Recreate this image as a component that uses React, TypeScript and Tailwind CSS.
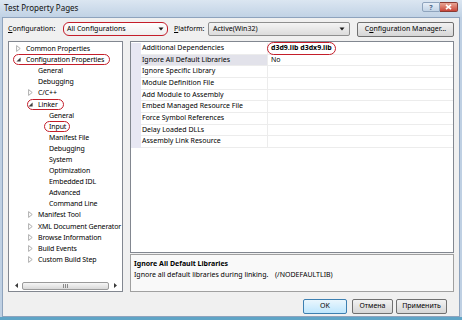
import React from "react";

const Collapsed = () => (
  <svg width="5" height="7" viewBox="0 0 5 7">
    <path d="M0.6 0.6 L4.2 3.5 L0.6 6.4 Z" fill="#ffffff" stroke="#a6a6a6" strokeWidth="0.9" />
  </svg>
);
const Expanded = () => (
  <svg width="5" height="5" viewBox="0 0 5 5">
    <path d="M4.6 0.4 L4.6 4.6 L0.4 4.6 Z" fill="#404040" />
  </svg>
);

type TreeItem = {
  level: 0 | 1 | 2;
  label: string;
  arrow?: "c" | "e";
  circle?: "cp" | "lk" | "in";
};

const tree: TreeItem[] = [
  { level: 0, label: "Common Properties", arrow: "c" },
  { level: 0, label: "Configuration Properties", arrow: "e", circle: "cp" },
  { level: 1, label: "General" },
  { level: 1, label: "Debugging" },
  { level: 1, label: "C/C++", arrow: "c" },
  { level: 1, label: "Linker", arrow: "e", circle: "lk" },
  { level: 2, label: "General" },
  { level: 2, label: "Input", circle: "in" },
  { level: 2, label: "Manifest File" },
  { level: 2, label: "Debugging" },
  { level: 2, label: "System" },
  { level: 2, label: "Optimization" },
  { level: 2, label: "Embedded IDL" },
  { level: 2, label: "Advanced" },
  { level: 2, label: "Command Line" },
  { level: 1, label: "Manifest Tool", arrow: "c" },
  { level: 1, label: "XML Document Generator", arrow: "c" },
  { level: 1, label: "Browse Information", arrow: "c" },
  { level: 1, label: "Build Events", arrow: "c" },
  { level: 1, label: "Custom Build Step", arrow: "c" },
];

const padClass: Record<number, string> = {
  0: "pl-[5px]",
  1: "pl-[17px]",
  2: "pl-[28px]",
};

const circleClass: Record<string, string> = {
  cp: "-left-[13px] -right-[6px]",
  lk: "-left-[11px] -right-[6px]",
  in: "-left-[5px] -right-[4px]",
};

function TreeRow({ item }: { item: TreeItem }) {
  return (
    <div className={`h-[11.1px] flex items-center whitespace-nowrap tracking-[-0.12px] ${padClass[item.level]}`}>
      <span className="w-[12px] pr-[4px] flex justify-center items-center shrink-0">
        {item.arrow === "c" ? <Collapsed /> : item.arrow === "e" ? <Expanded /> : null}
      </span>
      <span className="relative leading-[11px]">
        {item.label}
        {item.circle && (
          <span
            className={`absolute top-[0px] bottom-[0px] rounded-full border-[1.5px] border-[#c41e2a] ${circleClass[item.circle]}`}
          />
        )}
      </span>
    </div>
  );
}

const props: { name: string; value?: string; bold?: boolean; circled?: boolean; selected?: boolean }[] = [
  { name: "Additional Dependencies", value: "d3d9.lib d3dx9.lib", bold: true, circled: true },
  { name: "Ignore All Default Libraries", value: "No", selected: true },
  { name: "Ignore Specific Library" },
  { name: "Module Definition File" },
  { name: "Add Module to Assembly" },
  { name: "Embed Managed Resource File" },
  { name: "Force Symbol References" },
  { name: "Delay Loaded DLLs" },
  { name: "Assembly Link Resource" },
];

function DownArrow() {
  return (
    <svg width="6" height="4" viewBox="0 0 6 4">
      <path d="M0.5 0.5 L5.5 0.5 L3 3.5 Z" fill="#1a1a1a" />
    </svg>
  );
}

export default function App() {
  return (
    <div className="w-[462px] h-[320px] flex flex-col bg-[#bfd0e3] font-['Noto_Sans',sans-serif] text-[7px] text-black overflow-hidden">
      {/* Title bar */}
      <div className="h-[17px] flex items-start pl-[4px] pr-[4px] bg-gradient-to-b from-[#dbe6f1] to-[#c1d2e5]">
        <span className="mt-[3px] leading-[10px] text-[8px] text-[#111]">Test Property Pages</span>
        <div className="ml-auto flex mt-[2px]">
          <div className="w-[18px] h-[10px] rounded-l-[2px] border border-[#8fa4bd] bg-gradient-to-b from-[#e6eef7] to-[#c3d4e6] flex items-center justify-center text-[7px] leading-none text-[#4a6688] font-bold">
            ?
          </div>
          <div className="w-[18px] h-[10px] rounded-r-[2px] border border-l-0 border-[#8a3b34] bg-gradient-to-b from-[#e8a595] to-[#c8443a] flex items-center justify-center">
            <svg width="7" height="6" viewBox="0 0 7 6">
              <path d="M1 0.8 L6 5.2 M6 0.8 L1 5.2" stroke="#ffffff" strokeWidth="1.6" />
            </svg>
          </div>
        </div>
      </div>

      {/* Body */}
      <div className="flex-1 mx-[2px] bg-[#f0f0f0] border border-[#8ea3bd] flex flex-col px-[5px] pt-[4px]">
        {/* Configuration row */}
        <div className="h-[14px] flex items-center">
          <span className="w-[55px] shrink-0">
            <span className="underline">C</span>onfiguration:
          </span>
          <div className="w-[105px] h-[14px] shrink-0 rounded-[6px] border-[1.5px] border-[#c41e2a] bg-gradient-to-b from-[#ffffff] to-[#eeeeee] flex items-center pl-[3px] pr-[3px]">
            <span>All Configurations</span>
            <span className="ml-auto flex">
              <DownArrow />
            </span>
          </div>
          <span className="ml-[6px] w-[34px] shrink-0">
            <span className="underline">P</span>latform:
          </span>
          <div className="w-[142px] h-[14px] shrink-0 rounded-[2px] border border-[#8e8f8f] bg-gradient-to-b from-[#f4f4f4] to-[#dcdcdc] flex items-center pl-[4px] pr-[4px]">
            <span>Active(Win32)</span>
            <span className="ml-auto flex">
              <DownArrow />
            </span>
          </div>
          <div className="ml-[7px] flex-1 h-[15px] rounded-[2px] border border-[#707070] bg-gradient-to-b from-[#f2f2f2] to-[#d6d6d6] flex items-center justify-center">
            <span>
              C<span className="underline">o</span>nfiguration Manager...
            </span>
          </div>
        </div>

        {/* Main content */}
        <div className="mt-[5px] h-[251px] flex gap-[7px]">
          {/* Tree */}
          <div className="w-[115px] shrink-0 border border-[#828790] bg-white flex flex-col">
            <div className="pt-[1px] flex flex-col overflow-hidden">
              {tree.map((t, i) => (
                <TreeRow key={i} item={t} />
              ))}
            </div>
            <div className="mt-auto h-[10px] flex items-center px-[1px] pb-[1px]">
              <div className="w-[12px] h-[9px] flex items-center justify-center">
                <svg width="3" height="5" viewBox="0 0 3 5">
                  <path d="M3 0 L0 2.5 L3 5 Z" fill="#3a3a3a" />
                </svg>
              </div>
              <div className="flex-1 h-[8px] rounded-[2px] border border-[#9a9a9a] bg-gradient-to-b from-[#f6f6f6] to-[#d9d9d9] flex items-center justify-center">
                <svg width="6" height="4" viewBox="0 0 6 4">
                  <path d="M0.5 0 V4 M2.5 0 V4 M4.5 0 V4" stroke="#707070" strokeWidth="0.8" />
                </svg>
              </div>
              <div className="w-[12px] h-[9px] flex items-center justify-center">
                <svg width="3" height="5" viewBox="0 0 3 5">
                  <path d="M0 0 L3 2.5 L0 5 Z" fill="#3a3a3a" />
                </svg>
              </div>
            </div>
          </div>

          {/* Right side */}
          <div className="flex-1 flex flex-col">
            <div className="h-[212px] border border-[#828790] bg-white pt-[1px] flex flex-col">
              {props.map((p, i) => (
                <div key={i} className="flex h-[11.66px]">
                  <div className="w-[10px] shrink-0 bg-[#e7e7f3]" />
                  <div
                    className={`w-[127px] shrink-0 pl-[1px] border-b border-r border-[#ececec] flex items-center whitespace-nowrap ${
                      p.selected ? "bg-[#e2e2ea]" : ""
                    }`}
                  >
                    {p.name}
                  </div>
                  <div className="flex-1 border-b border-[#ececec] pl-[3px] flex items-center whitespace-nowrap">
                    {p.value && (
                      <span className={`relative ${p.bold ? "font-bold" : ""}`}>
                        {p.value}
                        {p.circled && (
                          <span className="absolute -left-[4px] -right-[4px] top-[-1.5px] bottom-[-1.5px] rounded-full border-[1.5px] border-[#c41e2a]" />
                        )}
                      </span>
                    )}
                  </div>
                </div>
              ))}
            </div>
            <div className="mt-[1px] flex-1 border border-[#a0a0a0] bg-[#f9f9f9] pl-[3px] pt-[3px] flex flex-col">
              <div className="font-bold leading-[11px]">Ignore All Default Libraries</div>
              <div className="leading-[11px] flex whitespace-nowrap">
                <span className="w-[141px] shrink-0">Ignore all default libraries during linking.</span>
                <span>(/NODEFAULTLIB)</span>
              </div>
            </div>
          </div>
        </div>

        {/* Buttons */}
        <div className="mt-[7px] h-[15px] flex justify-end pr-[7px]">
          <div className="w-[44px] h-[15px] rounded-[2px] border border-[#3c7fb1] bg-gradient-to-b from-[#eaf6fd] to-[#bee6fd] flex items-center justify-center">
            OK
          </div>
          <div className="ml-[5px] w-[41px] h-[15px] rounded-[2px] border border-[#707070] bg-gradient-to-b from-[#f2f2f2] to-[#d6d6d6] flex items-center justify-center">
            Отмена
          </div>
          <div className="ml-[3px] w-[51px] h-[15px] rounded-[2px] border border-[#707070] bg-gradient-to-b from-[#f2f2f2] to-[#d6d6d6] flex items-center justify-center">
            Применить
          </div>
        </div>
      </div>

      {/* bottom frame */}
      <div className="h-[3px] bg-[#5fa4c6]" />
    </div>
  );
}
